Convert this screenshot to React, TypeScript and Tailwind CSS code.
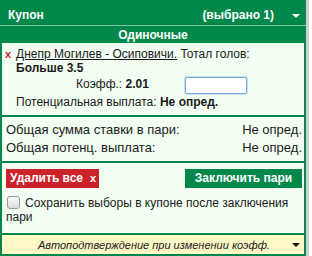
export default function App() {
  return (
    <div className="flex w-[312px] h-[256px] bg-white font-['Liberation_Sans',Arial,sans-serif] text-[#1a1a1a]">
      <div className="w-[306px] h-[256px] flex flex-col bg-[#00884b]">
        <div className="h-[25px] flex items-center pt-[5px] pl-[8px] pr-[6px] text-white font-bold text-[12px] leading-[15px]">
          <span className="flex-1">Купон</span>
          <span>(выбрано 1)</span>
          <svg width="8" height="4" viewBox="0 0 8 4" className="ml-[18px] mt-[2px]">
            <path d="M0 0 L8 0 L4 4 Z" fill="#ffffff" />
          </svg>
        </div>
        <div className="h-[1px] bg-[#7fc3a5]" />
        <div className="h-[17px] flex items-center justify-center text-white font-bold text-[12px] leading-[14px]">
          Одиночные
        </div>
        <div className="flex flex-col gap-[2px] px-[2px] pb-[2px]">
          <div className="h-[72px] bg-[#f3fff3] pt-[4px] text-[12px] leading-[14px]">
            <div className="flex">
              <span className="w-[14px] pl-[3px] text-[#cc1f26] font-bold text-[11px]">x</span>
              <div>
                <span className="underline">Днепр Могилев - Осиповичи.</span> Тотал голов:
              </div>
            </div>
            <div className="pl-[14px] font-bold">Больше 3.5</div>
            <div className="grid grid-cols-[183px_62px] h-[20px]">
              <div className="pl-[74px] pt-[2px]">
                Коэфф.: <span className="font-bold">2.01</span>
              </div>
              <div className="mt-[2px] h-[17px] bg-white border border-[#7aa9e6] rounded-[2px] shadow-[0_0_0_1px_rgba(122,169,230,0.35)]" />
            </div>
            <div className="pl-[14px]">
              Потенциальная выплата: <span className="font-bold">Не опред.</span>
            </div>
          </div>
          <div className="h-[44px] bg-[#f3fff3] pt-[4px] pl-[4px] pr-[2px] text-[13px] leading-[18px]">
            <div className="flex justify-between">
              <span>Общая сумма ставки в пари:</span>
              <span>Не опред.</span>
            </div>
            <div className="flex justify-between">
              <span>Общая потенц. выплата:</span>
              <span>Не опред.</span>
            </div>
          </div>
          <div className="h-[70px] bg-[#f3fff3] pt-[6px] pl-[4px] pr-[2px]">
            <div className="grid grid-cols-[93px_1fr_117px] h-[19px]">
              <div className="bg-[#cc2229] flex items-center pl-[4px] text-white font-bold text-[12px] leading-[15px]">
                <span>Удалить все</span>
                <span className="ml-[7px] text-[11px]">x</span>
              </div>
              <div />
              <div className="bg-[#00884b] flex items-center justify-center text-white font-bold text-[12px] leading-[15px]">
                Заключить пари
              </div>
            </div>
            <div className="mt-[8px] text-[12px] leading-[14px]">
              <span className="inline-block align-[-2px] w-[13px] h-[13px] rounded-[3px] border border-[#9a9a9a] bg-gradient-to-b from-[#fafafa] to-[#dedede] mr-[5px] ml-[1px]" />
              Сохранить выборы в купоне после заключения пари
            </div>
          </div>
          <div className="h-[19px] bg-[#fdf9c6] flex items-center pl-[36px] pr-[4px] text-[11px] leading-[14px] italic">
            <span className="flex-1">Автоподтверждение при изменении коэфф.</span>
            <svg width="8" height="4" viewBox="0 0 8 4">
              <path d="M0 0 L8 0 L4 4 Z" fill="#111111" />
            </svg>
          </div>
        </div>
      </div>
      <div className="w-[3px] h-[256px] bg-[#cfcfcf]" />
    </div>
  );
}
